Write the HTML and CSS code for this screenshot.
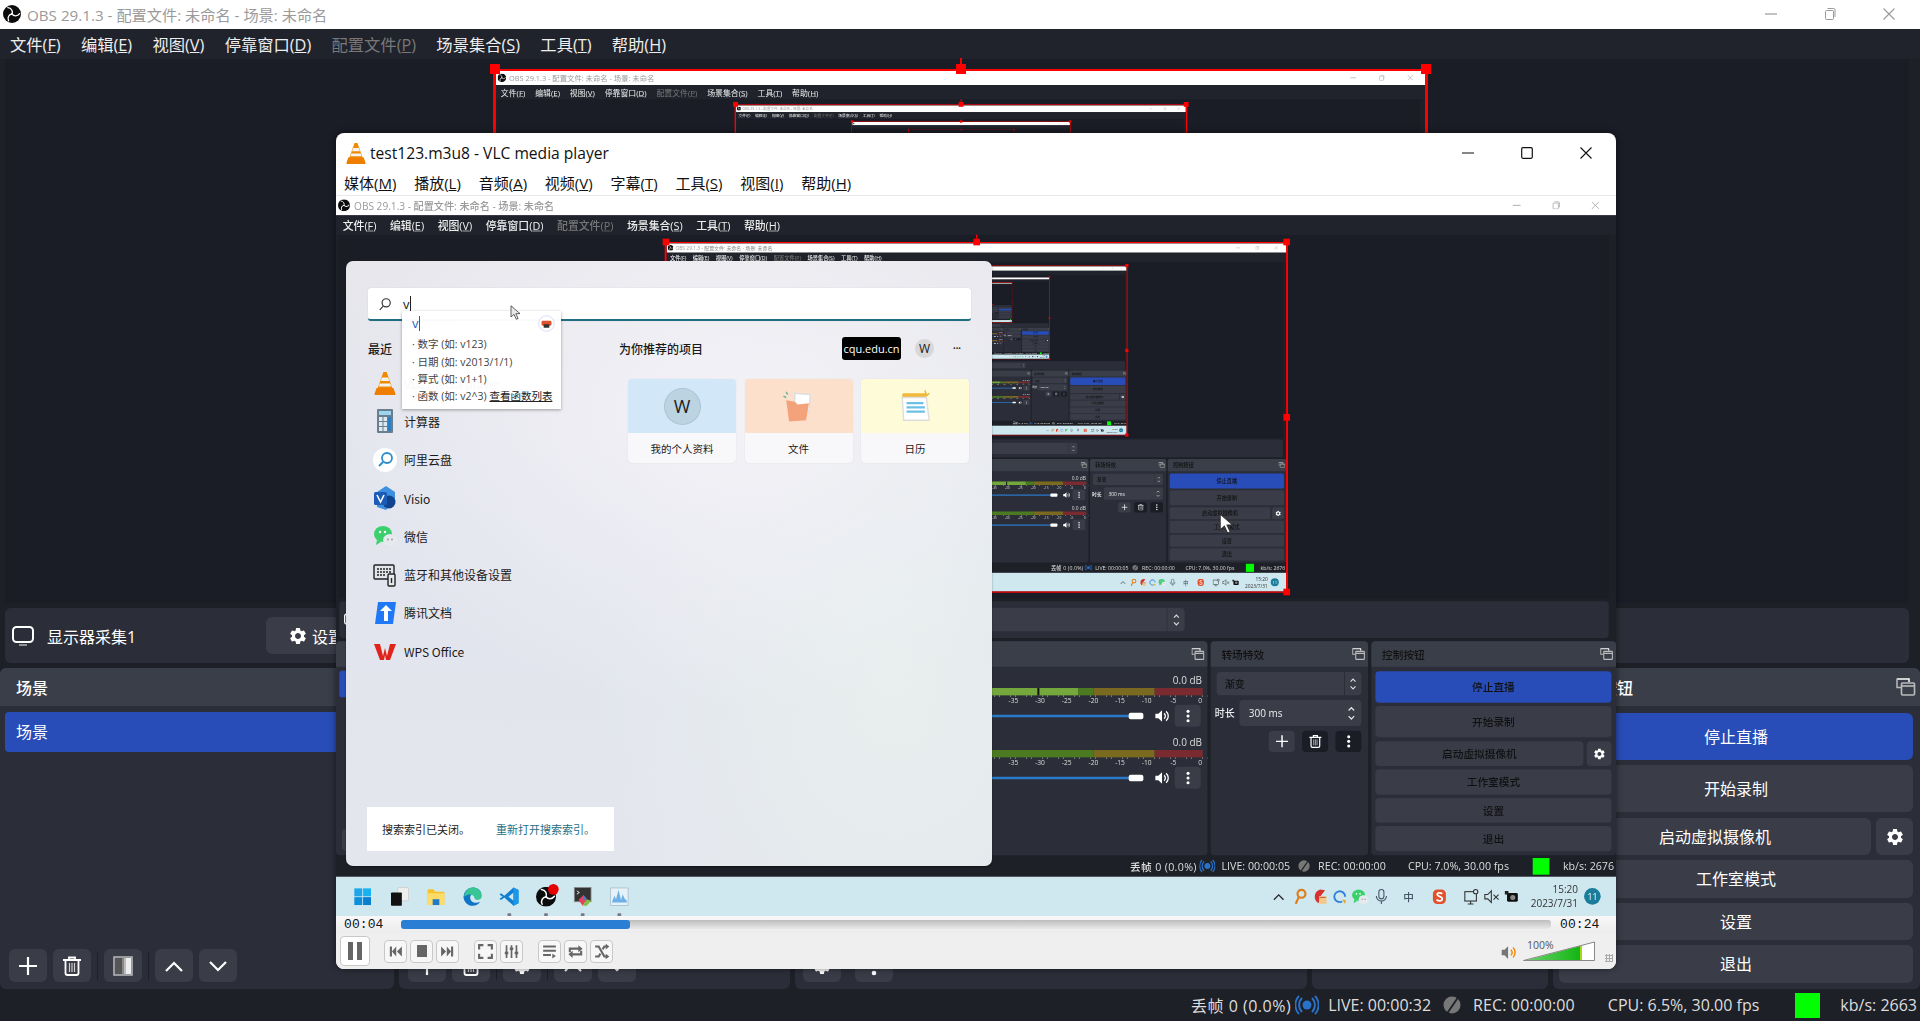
FILE: index.html
```html
<!DOCTYPE html>
<html lang="zh-CN">
<head>
<meta charset="utf-8">
<title>OBS 29.1.3 - VLC media player</title>
<link rel="stylesheet" href="styles.css">
</head>
<body>
<svg class="sprite" aria-hidden="true">
  <symbol id="i-obs" viewBox="0 0 24 24"><circle cx="12" cy="12" r="12" fill="#0c0c0c"/><g fill="none" stroke="#fff" stroke-width="1.800" stroke-linecap="round"><path d="M12 12C13.500 8.500 11.500 4 6.500 3.500"/><path d="M12 12C13.500 8.500 11.500 4 6.500 3.500" transform="rotate(120 12 12)"/><path d="M12 12C13.500 8.500 11.500 4 6.500 3.500" transform="rotate(240 12 12)"/></g></symbol>
  <symbol id="i-vlc" viewBox="0 0 24 24"><path d="M10.400 1h3.200l6 17H4.400z" fill="#f08a00"/><path d="M8.900 6.500h6.200l1.200 3.500H7.700zM6.800 12.500h10.400l1 3H5.800z" fill="#f3f3f3"/><path d="M3.600 17h16.800l2 5.500a1 1 0 0 1-1 1.500H2.600a1 1 0 0 1-1-1.500z" fill="#ef7d00"/></symbol>
  <symbol id="i-float" viewBox="0 0 20 20"><path d="M1 2h12v3" fill="none" stroke="#fff" stroke-width="1.500"/><path d="M1 1.500v9h4" fill="none" stroke="#bbb" stroke-width="1.500"/><rect x="5.500" y="6" width="13" height="12" rx="1" fill="none" stroke="#bbb" stroke-width="1.600"/><path d="M5.500 9h13" stroke="#bbb" stroke-width="1.600"/></symbol>
  <symbol id="i-monitor" viewBox="0 0 24 24"><rect x="2" y="3" width="20" height="15" rx="3.500" fill="none" stroke="#fff" stroke-width="2"/><path d="M8 21h8" stroke="#aaa" stroke-width="1.600"/></symbol>
  <symbol id="i-gear" viewBox="0 0 24 24"><path fill="#fff" d="M19.140 12.940c.04-.3.06-.61.06-.94 0-.32-.02-.64-.07-.94l2.030-1.580a.49.49 0 0 0 .12-.61l-1.920-3.320a.488.488 0 0 0-.59-.22l-2.390.96c-.5-.38-1.030-.7-1.620-.94l-.36-2.540a.484.484 0 0 0-.48-.41h-3.840c-.24 0-.43.17-.47.41l-.36 2.540c-.59.24-1.130.57-1.620.94l-2.390-.96c-.22-.08-.47 0-.59.22L2.740 8.870c-.12.21-.08.47.12.61l2.030 1.580c-.05.3-.09.63-.09.94s.02.64.07.94l-2.030 1.580a.49.49 0 0 0-.12.61l1.920 3.320c.12.22.37.29.59.22l2.390-.96c.5.38 1.030.7 1.620.94l.36 2.540c.05.24.24.41.48.41h3.840c.24 0 .44-.17.47-.41l.36-2.540c.59-.24 1.130-.56 1.620-.94l2.390.96c.22.08.47 0 .59-.22l1.920-3.320c.12-.22.07-.47-.12-.61l-2.010-1.580zM12 15.600c-1.980 0-3.600-1.620-3.600-3.600s1.620-3.600 3.600-3.600 3.600 1.620 3.600 3.600-1.620 3.600-3.600 3.600z"/></symbol>
  <symbol id="i-plus" viewBox="0 0 20 20"><path d="M10 1v18M1 10h18" stroke="#fff" stroke-width="2.200"/></symbol>
  <symbol id="i-trash" viewBox="0 0 20 20"><path d="M1 4h18M7 4V1.500h6V4" fill="none" stroke="#fff" stroke-width="1.800"/><path d="M3.500 4v13a2 2 0 0 0 2 2h9a2 2 0 0 0 2-2V4" fill="none" stroke="#fff" stroke-width="1.800"/><path d="M7.500 7v9M10 7v9M12.500 7v9" stroke="#ccc" stroke-width="1.200"/></symbol>
  <symbol id="i-filter" viewBox="0 0 20 20"><rect x="1" y="1" width="18" height="18" fill="#3a3d48" stroke="#bbb" stroke-width="1.500"/><rect x="2" y="2" width="7" height="16" fill="#555"/><rect x="9" y="2" width="2" height="16" fill="#888"/><rect x="11" y="2" width="2" height="16" fill="#bbb"/><rect x="13" y="2" width="5" height="16" fill="#eee"/></symbol>
  <symbol id="i-up" viewBox="0 0 20 20"><path d="M2 15l8-8 8 8" fill="none" stroke="#fff" stroke-width="2.200"/></symbol>
  <symbol id="i-down" viewBox="0 0 20 20"><path d="M2 6l8 8 8-8" fill="none" stroke="#fff" stroke-width="2.200"/></symbol>
  <symbol id="i-kebab" viewBox="0 0 20 20"><g fill="#fff"><circle cx="10" cy="3" r="2.300"/><circle cx="10" cy="10" r="2.300"/><circle cx="10" cy="17" r="2.300"/></g></symbol>
  <symbol id="i-speaker" viewBox="0 0 24 24"><path d="M2 8.500h4.500L12 3.500v17l-5.500-5H2z" fill="#fff"/><path d="M15 8a5 5 0 0 1 0 8M18 5a9 9 0 0 1 0 14" fill="none" stroke="#fff" stroke-width="2"/></symbol>
  <symbol id="i-live" viewBox="0 0 24 24"><circle cx="12" cy="12" r="4.500" fill="#2a72c8"/><path d="M7 5a10 10 0 0 0 0 14M17 5a10 10 0 0 1 0 14M4 3a13 13 0 0 0 0 18M20 3a13 13 0 0 1 0 18" fill="none" stroke="#2a72c8" stroke-width="1.900"/></symbol>
  <symbol id="i-rec" viewBox="0 0 24 24"><circle cx="12" cy="12" r="8.500" fill="#777"/><path d="M19 3L6 22" stroke="#1e2027" stroke-width="1.800"/></symbol>
  <symbol id="i-win" viewBox="0 0 24 24"><g fill="#0d8fde"><rect x="2" y="2" width="9.500" height="9.500" fill="#1fa5ea"/><rect x="12.500" y="2" width="9.500" height="9.500" fill="#18b2f0"/><rect x="2" y="12.500" width="9.500" height="9.500"/><rect x="12.500" y="12.500" width="9.500" height="9.500" fill="#0a7fd0"/></g></symbol>
  <symbol id="i-view" viewBox="0 0 24 24"><rect x="10" y="1" width="13" height="16" rx="1" fill="#eee" stroke="#ccc"/><rect x="2" y="7" width="13" height="16" rx="1" fill="#111"/></symbol>
  <symbol id="i-folder" viewBox="0 0 24 24"><path d="M2 4a1 1 0 0 1 1-1h6l2 3h10a1 1 0 0 1 1 1v14a1 1 0 0 1-1 1H3a1 1 0 0 1-1-1z" fill="#f6c12b"/><path d="M2 8h20v13a1 1 0 0 1-1 1H3a1 1 0 0 1-1-1z" fill="#fcdc66"/><rect x="8" y="15" width="8" height="7" fill="#1f7cc8"/></symbol>
  <symbol id="i-edge" viewBox="0 0 24 24"><path d="M12 1a11 11 0 0 0-11 11c0 6 5 11 11 11 4 0 7-2 9-5-5 3-12 1-12-5 0-3 3-5 6-5 3 0 5 2 5 4 2-1 2-3 2-4 0-4-5-7-10-7z" fill="#0f76c6"/><path d="M12 1c5 0 11 3 11 10 0 3-2 5-5 5-2 0-4-1-4-3 0-3-6-6-12-1C2 6 6 1 12 1z" fill="#39c694"/></symbol>
  <symbol id="i-vscode" viewBox="0 0 24 24"><path d="M17 1l6 3v16l-6 3L6 13l-4 3-2-1.500L4 12 0 9.500 2 8l4 3z" fill="#0e7fd2"/><path d="M17 7l-6 5 6 5z" fill="#cfe8ef"/><path d="M17 1l6 3v16l-6 3z" fill="#1c98e8"/></symbol>
  <symbol id="i-term" viewBox="0 0 24 24"><rect x="2" y="1" width="20" height="17" fill="#333" stroke="#888"/><path d="M5 5l3 2-3 2" fill="none" stroke="#fff"/><path d="M13 10l4 5-5 8-5-7z" fill="#e8405a"/><path d="M17 15l5 2-5 6-5 0z" fill="#7cc23f"/><path d="M13 10l4 5-5 1z" fill="#3f7fd8"/></symbol>
  <symbol id="i-perf" viewBox="0 0 24 24"><rect x="1.500" y="1.500" width="21" height="21" fill="#e6f2f8" stroke="#a9bfcb"/><path d="M3 19l3-8 2 4 3-11 3 12 2-7 2 5 3 3v2H3z" fill="#6fb0e6"/></symbol>
  <symbol id="i-key" viewBox="0 0 24 24"><circle cx="14" cy="8" r="5.500" fill="none" stroke="#de7d1a" stroke-width="3"/><path d="M10 13l-4 9" stroke="#de7d1a" stroke-width="3"/></symbol>
  <symbol id="i-redapp" viewBox="0 0 24 24"><path d="M12 2c-6 2-8 7-7 13 1 3 3 5 5 6l2-9 7-9z" fill="#d9322e"/><rect x="11" y="11" width="10" height="11" fill="#f3c98b"/><path d="M12 13h8" stroke="#a33"/></symbol>
  <symbol id="i-ring" viewBox="0 0 24 24"><path d="M19 12a7.500 7.500 0 1 0-4 6.600" fill="none" stroke="#2f7fd8" stroke-width="2.600"/><path d="M15 16l5 1-1 5" fill="#f0a020"/></symbol>
  <symbol id="i-wechat" viewBox="0 0 24 24"><ellipse cx="10" cy="10" rx="9" ry="8" fill="#3bd06c"/><path d="M4 16l-1 5 5-3z" fill="#3bd06c"/><ellipse cx="17" cy="16" rx="7" ry="6" fill="#e6eaee"/><circle cx="7" cy="8" r="1.200" fill="#fff"/><circle cx="12" cy="8" r="1.200" fill="#fff"/><circle cx="15" cy="15.500" r=".9" fill="#999"/><circle cx="19" cy="15.500" r=".9" fill="#999"/></symbol>
  <symbol id="i-mic" viewBox="0 0 24 24"><rect x="8.500" y="2" width="7" height="13" rx="3.500" fill="none" stroke="#456" stroke-width="1.500"/><path d="M5 11a7 7 0 0 0 14 0M12 18v4" fill="none" stroke="#456" stroke-width="1.500"/></symbol>
  <symbol id="i-sogou" viewBox="0 0 24 24"><rect x="3" y="2" width="18" height="20" rx="6" fill="#e2502c"/><path d="M16 8c-2-2-7-2-7 1s7 2 7 6-6 3-8 1" fill="none" stroke="#fff" stroke-width="2.400"/></symbol>
  <symbol id="i-net" viewBox="0 0 24 24"><rect x="2" y="5" width="16" height="13" fill="none" stroke="#333" stroke-width="1.500"/><path d="M10 18v4M6 22h8" stroke="#333" stroke-width="1.500"/><circle cx="17" cy="5" r="3" fill="#cfe8ef" stroke="#333" stroke-width="1.500"/></symbol>
  <symbol id="i-mute" viewBox="0 0 24 24"><path d="M2 9h4l5-5v16l-5-5H2z" fill="none" stroke="#333" stroke-width="1.500"/><path d="M14 9l7 7M21 9l-7 7" stroke="#333" stroke-width="1.500"/></symbol>
  <symbol id="i-cam" viewBox="0 0 24 24"><rect x="5" y="7" width="15" height="12" rx="2" fill="#111"/><circle cx="13" cy="13" r="3.500" fill="#888"/><path d="M2 4h5v5H2z" fill="#222"/></symbol>
  <symbol id="i-search" viewBox="0 0 24 24"><circle cx="14" cy="10" r="7" fill="none" stroke="currentColor" stroke-width="2"/><path d="M9 15.500L3 22" stroke="currentColor" stroke-width="2"/></symbol>
  <symbol id="i-calc" viewBox="0 0 24 24"><rect x="4" y="0" width="16" height="24" rx="1" fill="#6a7f8e"/><rect x="6" y="2" width="12" height="4" fill="#9fd4ee"/><g fill="#dfe8ee"><rect x="6" y="8" width="3.500" height="4"/><rect x="10.500" y="8" width="3.500" height="4"/><rect x="6" y="13" width="3.500" height="4"/><rect x="10.500" y="13" width="3.500" height="4"/><rect x="6" y="18" width="3.500" height="4"/><rect x="10.500" y="18" width="3.500" height="4"/></g><rect x="15" y="8" width="3" height="14" fill="#2c7fc0"/></symbol>
  <symbol id="i-visio" viewBox="0 0 24 24"><path d="M13 0l9 6v9l-9 9-9-3V6z" fill="#3d8fe0"/><circle cx="16" cy="16" r="6.500" fill="#11438f"/><rect x="1" y="6" width="13" height="13" rx="1.500" fill="#1b5cb8"/><path d="M4 9l3.500 7L11 9" fill="none" stroke="#fff" stroke-width="1.600"/></symbol>
  <symbol id="i-devices" viewBox="0 0 24 24"><rect x="1" y="2" width="20" height="14" rx="1" fill="none" stroke="#222" stroke-width="1.400"/><path d="M4 6h14M4 9h14M4 12h8" stroke="#222" stroke-width="1.400" stroke-dasharray="2 1"/><rect x="15" y="11" width="7" height="12" rx="1" fill="#e8e9ef" stroke="#222" stroke-width="1.400"/><path d="M18.500 15v5" stroke="#222" stroke-width="1.400"/></symbol>
  <symbol id="i-tdoc" viewBox="0 0 24 24"><path d="M5 1h18l-3 22H2z" fill="#1f78f5"/><path d="M13 4l6 6h-4v10h-4V10H7z" fill="#fff"/></symbol>
  <symbol id="i-wps" viewBox="0 0 24 24"><path d="M1 5h6l3 12 2-8 2 8 3-12h6l-6 16h-4l-1-5-1 5H7z" fill="#e0241c"/></symbol>
  <symbol id="i-ali" viewBox="0 0 24 24"><circle cx="12" cy="12" r="12" fill="#fff"/><circle cx="14" cy="10" r="5" fill="none" stroke="#2a8cc9" stroke-width="1.800"/><path d="M10 14l-4 4" stroke="#2a8cc9" stroke-width="1.800"/></symbol>
  <symbol id="i-files" viewBox="0 0 24 24"><path d="M1 5l2 1M3 2l1 2" stroke="#6fb59a"/><path d="M9 3l11 1-1 12-10-1z" fill="#fff" stroke="#ddd"/><path d="M3 8l6 1 2 2 8-1-2 12-12 1z" fill="#f3a279"/></symbol>
  <symbol id="i-cal" viewBox="0 0 24 24"><path d="M19 1l1 3M22 3l-2 2" stroke="#e8b23c"/><rect x="3" y="3" width="17" height="4" rx="1" fill="#f0b93a"/><path d="M3 6h17l2 16H4z" fill="#fff" stroke="#ddd"/><path d="M6 10h12M6 13h13M6 16h13" stroke="#6cc0e6" stroke-width="1.700"/></symbol>
  <symbol id="i-ime" viewBox="0 0 24 24"><circle cx="12" cy="12" r="11" fill="#fff" stroke="#c8d0f0"/><rect x="5" y="8" width="14" height="7" rx="2" fill="#e2502c"/><rect x="8" y="13" width="8" height="5" fill="#333"/></symbol>
  <symbol id="i-prev" viewBox="0 0 24 24"><path d="M4 5h3v14H4zM13 5v14l-6-7zM21 5v14l-7-7z" fill="#666"/></symbol>
  <symbol id="i-next" viewBox="0 0 24 24"><path d="M20 5h-3v14h3zM11 5v14l6-7zM3 5v14l7-7z" fill="#666"/></symbol>
  <symbol id="i-fs" viewBox="0 0 24 24"><path d="M3 9V3h6M15 3h6v6M21 15v6h-6M9 21H3v-6" fill="none" stroke="#666" stroke-width="3"/></symbol>
  <symbol id="i-ext" viewBox="0 0 24 24"><path d="M5 3v18M12 3v18M19 3v18" stroke="#666" stroke-width="2.400"/><path d="M2.500 14h5M9.500 8h5M16.500 14h5" stroke="#666" stroke-width="3.500"/></symbol>
  <symbol id="i-list" viewBox="0 0 24 24"><path d="M3 5h18M3 11h18M3 17h11" stroke="#666" stroke-width="3"/><path d="M16 15v7l5-3.500z" fill="#666"/></symbol>
  <symbol id="i-loop" viewBox="0 0 24 24"><path d="M4 13V8h13M20 11v5H7" fill="none" stroke="#666" stroke-width="3"/><path d="M16 3v10l6-5zM8 11v10l-6-5z" fill="#666"/></symbol>
  <symbol id="i-rand" viewBox="0 0 24 24"><path d="M3 5h5l8 14h4M3 19h5l2.500-4M13.500 9L16 5h4" fill="none" stroke="#666" stroke-width="3"/><path d="M18 1v8l5-4zM18 15v8l5-4z" fill="#666"/></symbol>
  <symbol id="i-vol" viewBox="0 0 24 24"><path d="M1 8h4l5-5v18l-5-5H1z" fill="#777"/><path d="M14 8a6 6 0 0 1 0 8M17 5a10 10 0 0 1 0 14" fill="none" stroke="#f08a00" stroke-width="2"/></symbol>
  <symbol id="i-min" viewBox="0 0 12 12"><path d="M0 6h12" stroke="currentColor" stroke-width="1.200"/></symbol>
  <symbol id="i-restore" viewBox="0 0 12 12"><rect x="1.500" y="2.500" width="8" height="9" rx="1" fill="none" stroke="currentColor"/><path d="M3.500 .5h6a1.500 1.500 0 0 1 1.500 1.500v7" fill="none" stroke="currentColor"/></symbol>
  <symbol id="i-max" viewBox="0 0 12 12"><rect x=".7" y=".7" width="10.600" height="10.600" rx="1.200" fill="none" stroke="currentColor" stroke-width="1.200"/></symbol>
  <symbol id="i-close" viewBox="0 0 12 12"><path d="M.5 .5l11 11M11.500 .5l-11 11" stroke="currentColor" stroke-width="1.100"/></symbol>
  <symbol id="i-stepper" viewBox="0 0 10 18"><path d="M2 6l3-3 3 3M2 12l3 3 3-3" fill="none" stroke="#ddd" stroke-width="1.400"/></symbol>
  <symbol id="i-cursor" viewBox="0 0 14 20"><path d="M1 1v15l4-3.500 3 6.500 2.500-1-3-6.500h5.500z" stroke="#333" stroke-width="1"/></symbol>
</svg>

<template id="display-tpl">
  <div class="display">
    <div class="obs">
      <header class="obs-title">
        <svg class="obs-logo"><use href="#i-obs"/></svg>
        <span class="obs-title-text">OBS 29.1.3 - 配置文件: 未命名 - 场景: 未命名</span>
        <span class="win-btns">
          <span class="win-btn"><svg class="win-ico"><use href="#i-min"/></svg></span>
          <span class="win-btn"><svg class="win-ico"><use href="#i-restore"/></svg></span>
          <span class="win-btn"><svg class="win-ico"><use href="#i-close"/></svg></span>
        </span>
      </header>
      <nav class="obs-menu">
        <span>文件(<u>F</u>)</span><span>编辑(<u>E</u>)</span><span>视图(<u>V</u>)</span><span>停靠窗口(<u>D</u>)</span><span class="is-off">配置文件(<u>P</u>)</span><span>场景集合(<u>S</u>)</span><span>工具(<u>T</u>)</span><span>帮助(<u>H</u>)</span>
      </nav>
      <div class="preview">
        <div class="selection">
          <div class="capture-slot"></div>
          <i class="hd hd-tl"></i><i class="hd hd-tc"></i><i class="hd hd-tr"></i><i class="hd hd-ml"></i><i class="hd hd-mr"></i><i class="hd hd-bl"></i><i class="hd hd-bc"></i><i class="hd hd-br"></i>
        </div>
      </div>
      <div class="source-bar">
        <svg class="src-ico"><use href="#i-monitor"/></svg>
        <span class="src-name">显示器采集1</span>
        <span class="src-btn"><svg class="src-gear"><use href="#i-gear"/></svg>设置</span>
        <span class="src-btn src-btn-filter">滤镜</span>
        <span class="src-label">屏幕</span>
        <span class="src-combo">显示器 1</span>
        <span class="src-step"><svg class="stepper"><use href="#i-stepper"/></svg></span>
      </div>
      <div class="docks">
        <section class="dock">
          <div class="dock-head"><span>场景</span><svg class="float-ico"><use href="#i-float"/></svg></div>
          <div class="dock-body">
            <div class="scene-row">场景</div>
            <div class="dock-tools">
              <span class="tbtn"><svg class="tico"><use href="#i-plus"/></svg></span>
              <span class="tbtn"><svg class="tico"><use href="#i-trash"/></svg></span>
              <span class="tsep"></span>
              <span class="tbtn"><svg class="tico"><use href="#i-filter"/></svg></span>
              <span class="tsep"></span>
              <span class="tbtn"><svg class="tico"><use href="#i-up"/></svg></span>
              <span class="tbtn"><svg class="tico"><use href="#i-down"/></svg></span>
            </div>
          </div>
        </section>
        <section class="dock">
          <div class="dock-head"><span>来源</span><svg class="float-ico"><use href="#i-float"/></svg></div>
          <div class="dock-body">
            <div class="dock-tools">
              <span class="tbtn"><svg class="tico"><use href="#i-plus"/></svg></span>
              <span class="tbtn"><svg class="tico"><use href="#i-trash"/></svg></span>
              <span class="tsep"></span>
              <span class="tbtn"><svg class="tico"><use href="#i-gear"/></svg></span>
              <span class="tsep"></span>
              <span class="tbtn"><svg class="tico"><use href="#i-up"/></svg></span>
              <span class="tbtn"><svg class="tico"><use href="#i-down"/></svg></span>
            </div>
          </div>
        </section>
        <section class="dock">
          <div class="dock-head"><span>音频混音器</span><svg class="float-ico"><use href="#i-float"/></svg></div>
          <div class="dock-body mixer">
            <div class="channel">
              <div class="ch-top"><span class="ch-name">桌面音频</span><span class="ch-db">0.0 dB</span></div>
              <div class="meter"><i class="m-live"></i><i class="m-green"></i><i class="m-yellow"></i><i class="m-red"></i><i class="m-peak"></i></div>
              <div class="ticks"><span>-60</span><span>-55</span><span>-50</span><span>-45</span><span>-40</span><span>-35</span><span>-30</span><span>-25</span><span>-20</span><span>-15</span><span>-10</span><span>-5</span><span>0</span></div>
              <div class="fader"><div class="track"></div><i class="thumb"></i><svg class="spk"><use href="#i-speaker"/></svg><span class="tbtn kebab"><svg class="tico"><use href="#i-kebab"/></svg></span></div>
            </div>
            <div class="channel">
              <div class="ch-top"><span class="ch-name">麦克风/Aux</span><span class="ch-db">0.0 dB</span></div>
              <div class="meter"><i class="m-green m-green-full"></i><i class="m-yellow"></i><i class="m-red"></i></div>
              <div class="ticks"><span>-60</span><span>-55</span><span>-50</span><span>-45</span><span>-40</span><span>-35</span><span>-30</span><span>-25</span><span>-20</span><span>-15</span><span>-10</span><span>-5</span><span>0</span></div>
              <div class="fader"><div class="track"></div><i class="thumb"></i><svg class="spk"><use href="#i-speaker"/></svg><span class="tbtn kebab"><svg class="tico"><use href="#i-kebab"/></svg></span></div>
            </div>
            <div class="dock-tools mixer-tools">
              <span class="tbtn"><svg class="tico"><use href="#i-gear"/></svg></span>
              <span class="tbtn"><svg class="tico"><use href="#i-kebab"/></svg></span>
            </div>
          </div>
        </section>
        <section class="dock">
          <div class="dock-head"><span>转场特效</span><svg class="float-ico"><use href="#i-float"/></svg></div>
          <div class="dock-body trans">
            <div class="t-combo"><span class="t-combo-text">渐变</span><span class="t-combo-step"><svg class="stepper"><use href="#i-stepper"/></svg></span></div>
            <div class="t-time"><span>时长</span><div class="t-input"><span>300 ms</span><svg class="stepper stepper-lg"><use href="#i-stepper"/></svg></div></div>
            <div class="t-btns">
              <span class="tbtn"><svg class="tico"><use href="#i-plus"/></svg></span>
              <span class="tbtn tbtn-dark"><svg class="tico"><use href="#i-trash"/></svg></span>
              <span class="tbtn tbtn-dark"><svg class="tico"><use href="#i-kebab"/></svg></span>
            </div>
          </div>
        </section>
        <section class="dock">
          <div class="dock-head"><span>控制按钮</span><svg class="float-ico"><use href="#i-float"/></svg></div>
          <div class="dock-body controls">
            <div class="cbtn cbtn-blue">停止直播</div>
            <div class="cbtn cbtn-tall">开始录制</div>
            <div class="vcam-row"><div class="cbtn vcam">启动虚拟摄像机</div><div class="cbtn vcam-gear"><svg class="tico"><use href="#i-gear"/></svg></div></div>
            <div class="cbtn">工作室模式</div>
            <div class="cbtn">设置</div>
            <div class="cbtn">退出</div>
          </div>
        </section>
      </div>
      <footer class="status">
        <span class="st-drop">丢帧 0 (0.0%)</span>
        <svg class="st-ico"><use href="#i-live"/></svg>
        <span class="st-live" data-stat="live"></span>
        <svg class="st-ico st-ico-rec"><use href="#i-rec"/></svg>
        <span class="st-rec">REC: 00:00:00</span>
        <span class="st-cpu" data-stat="cpu"></span>
        <i class="st-square"></i>
        <span class="st-kb" data-stat="kb"></span>
      </footer>
    </div>
    <div class="taskbar">
      <div class="tb-apps">
        <svg class="tb-ico"><use href="#i-win"/></svg>
        <svg class="tb-ico"><use href="#i-view"/></svg>
        <svg class="tb-ico"><use href="#i-folder"/></svg>
        <svg class="tb-ico"><use href="#i-edge"/></svg>
        <span class="tb-run"><svg class="tb-ico"><use href="#i-vscode"/></svg></span>
        <span class="tb-run"><svg class="tb-ico"><use href="#i-obs"/></svg><i class="tb-red"></i></span>
        <span class="tb-run"><svg class="tb-ico"><use href="#i-term"/></svg></span>
        <span class="tb-run"><svg class="tb-ico"><use href="#i-perf"/></svg></span>
      </div>
      <div class="tb-tray">
        <svg class="tr-ico tr-chev"><use href="#i-up"/></svg>
        <svg class="tr-ico tr-key"><use href="#i-key"/></svg>
        <svg class="tr-ico"><use href="#i-redapp"/></svg>
        <svg class="tr-ico"><use href="#i-ring"/></svg>
        <svg class="tr-ico"><use href="#i-wechat"/></svg>
        <svg class="tr-ico tr-mic"><use href="#i-mic"/></svg>
        <span class="tr-text">中</span>
        <svg class="tr-ico tr-sogou"><use href="#i-sogou"/></svg>
        <svg class="tr-ico tr-net"><use href="#i-net"/></svg>
        <svg class="tr-ico"><use href="#i-mute"/></svg>
        <svg class="tr-ico"><use href="#i-cam"/></svg>
        <div class="tb-clock"><span>15:20</span><span>2023/7/31</span></div>
        <span class="tb-badge">11</span>
      </div>
    </div>
  </div>
</template>

<main class="desktop" id="desktop">
  <section class="vlc">
    <header class="vlc-title">
      <svg class="vlc-cone"><use href="#i-vlc"/></svg>
      <span class="vlc-title-text">test123.m3u8 - VLC media player</span>
      <span class="vlc-win">
        <span class="vlc-win-btn"><svg class="vlc-win-ico"><use href="#i-min"/></svg></span>
        <span class="vlc-win-btn"><svg class="vlc-win-ico"><use href="#i-max"/></svg></span>
        <span class="vlc-win-btn"><svg class="vlc-win-ico"><use href="#i-close"/></svg></span>
      </span>
    </header>
    <nav class="vlc-menu">
      <span>媒体(<u>M</u>)</span><span>播放(<u>L</u>)</span><span>音频(<u>A</u>)</span><span>视频(<u>V</u>)</span><span>字幕(<u>T</u>)</span><span>工具(<u>S</u>)</span><span>视图(<u>I</u>)</span><span>帮助(<u>H</u>)</span>
    </nav>
    <div class="vlc-video" id="vlc-video">
      <div class="search-panel">
        <div class="search-box">
          <svg class="search-ico"><use href="#i-search"/></svg>
          <span class="search-v">v</span><i class="caret"></i>
        </div>
        <div class="search-main">
          <div class="recent">
            <h3 class="s-head">最近</h3>
            <ul class="app-list">
              <li><svg class="app-ico"><use href="#i-vlc"/></svg><span>VLC media player</span></li>
              <li><svg class="app-ico"><use href="#i-calc"/></svg><span>计算器</span></li>
              <li><svg class="app-ico"><use href="#i-ali"/></svg><span>阿里云盘</span></li>
              <li><svg class="app-ico"><use href="#i-visio"/></svg><span>Visio</span></li>
              <li><svg class="app-ico"><use href="#i-wechat"/></svg><span>微信</span></li>
              <li><svg class="app-ico"><use href="#i-devices"/></svg><span>蓝牙和其他设备设置</span></li>
              <li><svg class="app-ico"><use href="#i-tdoc"/></svg><span>腾讯文档</span></li>
              <li><svg class="app-ico"><use href="#i-wps"/></svg><span>WPS Office</span></li>
            </ul>
          </div>
          <div class="recommend">
            <div class="rec-head">
              <h3 class="s-head">为你推荐的项目</h3>
              <span class="org">cqu.edu.cn</span>
              <span class="avatar-sm">W</span>
              <span class="dots">•••</span>
            </div>
            <div class="cards">
              <div class="card"><div class="card-top c-blue"><span class="avatar-lg">W</span></div><div class="card-label">我的个人资料</div></div>
              <div class="card"><div class="card-top c-orange"><svg class="card-ico"><use href="#i-files"/></svg></div><div class="card-label">文件</div></div>
              <div class="card"><div class="card-top c-yellow"><svg class="card-ico"><use href="#i-cal"/></svg></div><div class="card-label">日历</div></div>
            </div>
          </div>
        </div>
        <div class="notice"><span>搜索索引已关闭。</span><span class="notice-link">重新打开搜索索引。</span></div>
        <div class="ime">
          <div class="ime-head"><span class="ime-v">v</span><i class="ime-caret"></i><svg class="ime-logo"><use href="#i-ime"/></svg></div>
          <div class="ime-row">· 数字 (如: v123)</div>
          <div class="ime-row">· 日期 (如: v2013/1/1)</div>
          <div class="ime-row">· 算式 (如: v1+1)</div>
          <div class="ime-row">· 函数 (如: v2^3) <u>查看函数列表</u></div>
        </div>
        <svg class="cursor-small"><use href="#i-cursor"/></svg>
      </div>
      <svg class="cursor-big"><use href="#i-cursor"/></svg>
    </div>
    <div class="vlc-seek">
      <span class="vlc-time">00:04</span>
      <div class="seek-bar"><div class="seek-fill"></div></div>
      <span class="vlc-time">00:24</span>
    </div>
    <div class="vlc-ctrl">
      <span class="vb vb-pause"><i></i><i></i></span>
      <div class="vb-group"><span class="vb"><svg class="vb-ico"><use href="#i-prev"/></svg></span><span class="vb"><i class="vb-stop"></i></span><span class="vb"><svg class="vb-ico"><use href="#i-next"/></svg></span></div>
      <div class="vb-group"><span class="vb"><svg class="vb-ico"><use href="#i-fs"/></svg></span><span class="vb"><svg class="vb-ico"><use href="#i-ext"/></svg></span></div>
      <div class="vb-group"><span class="vb"><svg class="vb-ico"><use href="#i-list"/></svg></span><span class="vb"><svg class="vb-ico"><use href="#i-loop"/></svg></span><span class="vb"><svg class="vb-ico"><use href="#i-rand"/></svg></span></div>
      <div class="vol">
        <svg class="vol-ico"><use href="#i-vol"/></svg>
        <div class="vol-meter">
          <svg class="vol-tri" viewBox="0 0 72 20"><defs><linearGradient id="volg"><stop offset="0" stop-color="#6fd36f"/><stop offset="1" stop-color="#13b513"/></linearGradient></defs><path d="M0 20L72 1v19z" fill="#fff"/><path d="M0 20L57 5v15z" fill="url(#volg)"/><path d="M57 5l2-.5V20h-2z" fill="#a6d71c"/><path d="M.5 19.500L71.500 1v18.500z" fill="none" stroke="#888"/></svg>
          <span class="vol-pct">100%</span>
        </div>
        <i class="grip"></i>
      </div>
    </div>
  </section>
</main>
<script src="app.js"></script>
</body>
</html>
```

FILE: styles.css
```css
*{box-sizing:border-box}
html,body{margin:0;padding:0}
body{width:1920px;height:1021px;overflow:hidden;background:#1e2027;font-family:"Open Sans","Noto Sans CJK SC",sans-serif;color:#fff}
.sprite{display:none}
.desktop{position:relative;width:1920px;height:1021px;overflow:hidden}
.desktop>.display{height:1021px}
.desktop>.display>.taskbar{display:none}
.display{width:1920px;height:1080px;display:flex;flex-direction:column}
.obs{width:1920px;height:1021px;flex:none;background:#1e2027;display:flex;flex-direction:column}

/* OBS chrome */
.obs-title{height:29px;flex:none;background:#fff;display:flex;align-items:center;padding:0 0 2px 3px;color:#9a9a9a;font-size:15.200px}
.obs-logo{width:18px;height:18px;flex:none}
.obs-title-text{margin-left:6px;white-space:nowrap}
.win-btns{margin-left:auto;display:flex;padding-right:2px}
.win-btn{width:59px;display:flex;justify-content:center;color:#999}
.win-ico{width:12px;height:12px}
.obs-menu{height:30px;flex:none;background:#20232b;display:flex;align-items:center;gap:20.300px;padding-left:10px;font-size:16.300px;color:#eee;white-space:nowrap}
.obs-menu .is-off{color:#777}
.preview{height:544px;flex:none;margin:0 11px 0 5px;background:#1a1c26;position:relative}
.selection{position:absolute;left:491px;top:12px;width:929px;height:522px;box-shadow:-3px 0 0 #f00,3px 0 0 #f00,0 -2px 0 #f00,0 2px 0 #f00;background:#1a1c26}
.capture-slot{width:929px;height:522px;overflow:hidden}
.capture-slot>.display{transform:scale(.484);transform-origin:0 0}
.hd{position:absolute;width:10px;height:10px;background:#f00}
.hd-tl{left:-6px;top:-7px}
.hd-tc{left:460px;top:-7px}
.hd-tc::before{content:"";position:absolute;left:4px;top:-6px;width:2px;height:6px;background:#f00}
.hd-tr{right:-6px;top:-7px}
.hd-ml{left:-6px;top:256px}
.hd-mr{right:-6px;top:256px}
.hd-bl{left:-6px;bottom:-6px}
.hd-bc{left:460px;bottom:-6px}
.hd-br{right:-6px;bottom:-6px}

.source-bar{height:55px;flex:none;margin:5px 11px 5px 5px;background:#2b2e38;border-radius:6px;display:flex;align-items:center;padding-left:6px;font-size:16px;white-space:nowrap}
.src-ico{width:24px;height:24px;flex:none}
.src-name{margin-left:12px;width:219px;flex:none}
.src-btn{width:100px;height:37px;flex:none;background:#3a3d48;border-radius:6px;display:flex;align-items:center;justify-content:center;gap:4px}
.src-btn:first-of-type{justify-content:flex-start;padding-left:15px}
.src-btn-filter{margin-left:6px}
.src-gear{width:20px;height:20px}
.src-label{margin:0 12px 0 auto;color:#ddd}
.src-combo{width:690px;height:35px;flex:none;background:#3a3d48;border-radius:6px 0 0 6px;display:flex;align-items:center;padding-left:12px}
.src-step{width:27px;height:35px;flex:none;background:#3a3d48;border-left:1px solid #23252e;border-radius:0 6px 6px 0;display:flex;align-items:center;justify-content:center;margin-right:636px}
.stepper{width:13px;height:22px}

/* Docks */
.docks{height:321px;flex:none;display:grid;grid-template-columns:394px 391px 512px 236px 367px;column-gap:5px}
.dock{background:#2b2e38;border-radius:6px;display:flex;flex-direction:column;min-width:0;font-size:16px}
.dock-head{height:38px;flex:none;background:#3a3e48;border-radius:6px 6px 0 0;display:flex;align-items:center;justify-content:space-between;padding:0 4px 0 16px;font-weight:500}
.float-ico{width:20px;height:20px}
.dock-body{flex:1;display:flex;flex-direction:column;min-height:0}
.scene-row{height:40px;flex:none;margin:6px 5px 0;background:#284cb8;border-radius:4px;display:flex;align-items:center;padding:0 0 2px 11px}
.dock-tools{margin-top:auto;height:40px;flex:none;display:flex;gap:6px;padding:0 0 6px 9px;align-items:stretch}
.tbtn{width:38px;height:33px;flex:none;background:#3a3d48;border-radius:6px;display:flex;align-items:center;justify-content:center}
.tbtn-dark{background:#1a1c26}
.tico{width:20px;height:20px}
.tsep{width:1px;background:#1e2027;margin:3px 0}
.mixer{padding-top:10px;gap:13px}
.channel{display:flex;flex-direction:column}
.ch-top{height:20px;display:flex;justify-content:space-between;padding:0 8px 0 21px;font-size:15px;line-height:20px;color:#ddd}
.meter{margin:2px 7px 0 21px;height:11px;display:flex;position:relative}
.meter i{display:block;height:100%}
.m-live{width:297px;background:#74a83c}
.m-green{width:23px;background:#4c7a21}
.m-green-full{width:320px}
.m-yellow{width:92px;background:#7a6a1f}
.m-red{width:72px;background:#7a2b30}
.m-peak{position:absolute;left:236px;top:0;width:3px;background:#111}
.ticks{height:14px;display:flex;margin-left:1px;font-size:10px;line-height:15px;color:#ddd;background:repeating-linear-gradient(90deg,transparent 0 7px,#999 7px 8px) 0 0/100% 2px no-repeat}
.ticks span{width:40px;flex:none;text-align:center}
.fader{height:33px;display:flex;align-items:center;padding:0 10px 0 21px;position:relative}
.track{width:375px;height:4px;flex:none;background:#2a78c8;border-radius:2px}
.thumb{width:22px;height:10px;flex:none;background:#fff;border-radius:3px;margin-left:-2px}
.spk{width:24px;height:24px;margin-left:16px;flex:none}
.kebab{margin-left:auto;width:39px}
.mixer-tools{justify-content:flex-start;padding-left:8px;gap:14px}
.trans{padding:8px 10px 0 9px}
.t-combo{height:35px;flex:none;background:#3a3d48;border-radius:6px;display:flex;align-items:center}
.t-combo-text{flex:1;padding-left:12px;font-size:15px}
.t-combo-step{width:26px;height:35px;border-left:1px solid #23252e;display:flex;align-items:center;justify-content:center}
.t-time{margin-top:7px;display:flex;align-items:center;gap:7px;font-size:15px;color:#eee;margin-left:-3px}
.t-input{flex:1;height:39px;background:#3a3d48;border-radius:6px;display:flex;align-items:center;justify-content:space-between;padding:0 8px 0 14px}
.stepper-lg{height:34px;width:14px}
.t-btns{margin-top:7px;display:flex;justify-content:flex-end;gap:11px}
.t-btns .tbtn{width:39px;height:32px}
.controls{padding:7px 7px 0 6px}
.cbtn{height:38px;flex:none;background:#3a3d48;border-radius:6px;display:flex;align-items:center;justify-content:center;margin-bottom:5px;font-size:16px;padding-bottom:2px}
.cbtn-blue{height:47px;background:#284cb8}
.cbtn-tall{height:47px;margin-bottom:6px}
.vcam-row{display:flex;gap:5px;height:37px;margin-bottom:5px;flex:none}
.vcam{flex:1;height:37px;margin:0}
.vcam-gear{width:37px;height:37px;margin:0;padding:0}
.controls .cbtn:nth-child(5){height:37px}

/* Status */
.status{height:32px;flex:none;display:flex;align-items:center;font-size:16px;color:#ddd;white-space:nowrap;padding-right:3px}
.st-drop{margin-left:auto;letter-spacing:.5px}
.st-ico{width:24px;height:24px;flex:none;margin-left:4px}
.st-ico-rec{margin-left:9px}
.st-live{margin-left:9px}
.st-rec{margin-left:9px;letter-spacing:.1px}
.st-cpu{margin-left:33px}
.st-square{width:25px;height:25px;background:#0f0;margin-left:36px;flex:none}
.st-kb{margin-left:20px}

/* Taskbar inside the captured display */
.taskbar{height:59px;flex:none;background:#cfe8ef;display:flex;align-items:center;justify-content:space-between;color:#222}
.tb-apps{display:flex;align-items:center;gap:25px;padding-left:25px}
.tb-ico{width:30px;height:30px;display:block}
.tb-run{position:relative;display:block}
.tb-run::after{content:"";position:absolute;left:12px;bottom:-14px;width:6px;height:4px;border-radius:2px;background:#778}
.tb-red{position:absolute;right:-4px;top:-4px;width:16px;height:16px;border-radius:50%;background:#e60000}
.tb-tray{display:flex;align-items:center;padding-right:23px}
.tr-ico{width:26px;height:26px;margin-left:4px;flex:none}
.tr-chev{width:18px;height:18px;filter:invert(.85)}
.tr-key{margin-left:10px}
.tr-mic{margin-left:6px}
.tr-text{width:30px;margin-left:13px;text-align:center;font-size:16px;color:#456}
.tr-sogou{margin-left:18px}
.tr-net{margin-left:23px}
.tb-clock{display:flex;flex-direction:column;align-items:flex-end;margin-left:15px;font-size:15px;line-height:21px;color:#333}
.tb-badge{width:25px;height:25px;margin-left:9px;border-radius:50%;background:#1a7d9b;color:#fff;font-size:13px;display:flex;align-items:center;justify-content:center}

/* VLC */
.vlc{position:absolute;left:336px;top:133px;width:1280px;height:836px;background:#fff;border-radius:8px;overflow:hidden;display:flex;flex-direction:column;color:#111;box-shadow:0 0 6px rgba(0,0,0,.5)}
.vlc-title{height:43px;flex:none;display:flex;align-items:center;padding:0 0 4px 9px}
.vlc-cone{width:22px;height:22px;flex:none}
.vlc-title-text{margin-left:3px;font-size:15.600px;white-space:nowrap}
.vlc-win{margin-left:auto;display:flex;padding-right:1px}
.vlc-win-btn{width:59px;display:flex;justify-content:center;color:#111}
.vlc-win-ico{width:12px;height:12px}
.vlc-menu{height:20px;flex:none;display:flex;align-items:center;gap:17.800px;padding:0 0 6px 8px;font-size:15px;white-space:nowrap;border-bottom:1px solid #e8e8e8}
.vlc-video{height:720px;flex:none;position:relative;overflow:hidden;background:#1e2027}
.vlc-video>.display{transform:scale(.6667);transform-origin:0 0;font-weight:500}

.search-panel{position:absolute;left:10px;top:65px;width:646px;height:605px;border-radius:7px;padding:27px 21px 15px 22px;display:flex;flex-direction:column;color:#1a1a1a;font-family:"Noto Sans CJK SC","Open Sans",sans-serif;background:radial-gradient(400px 300px at 60% 25%,rgba(245,243,248,.9),transparent),radial-gradient(300px 400px at 85% 70%,rgba(232,240,238,.9),transparent),linear-gradient(#e7e7ec,#e2e5ee 45%,#e4e6ed);box-shadow:0 1px 2px rgba(0,0,0,.4)}
.search-box{height:33px;flex:none;background:#fff;border-radius:3px;border-bottom:2px solid #1f6f83;display:flex;align-items:center;padding-left:10px;box-shadow:0 0 1px #bbb}
.search-ico{width:14px;height:14px;color:#333}
.search-v{margin-left:11px;font-size:13px;font-family:"Open Sans",sans-serif}
.caret{width:1px;height:16px;background:#222}
.search-main{flex:1;display:flex;padding-top:16px;min-height:0}
.recent{width:251px;flex:none}
.s-head{margin:0;height:23px;display:flex;align-items:center;font-size:12px;font-weight:500;white-space:nowrap}
.app-list{list-style:none;margin:4px 0 0;padding:0 0 0 5px}
.app-list li{height:38.300px;display:flex;align-items:center;gap:7px;font-size:12px}
.app-ico{width:24px;height:24px;flex:none}
.recommend{flex:1;min-width:0}
.rec-head{height:23px;display:flex;align-items:center}
.org{margin-left:auto;width:59px;height:23px;flex:none;background:#000;color:#fff;border-radius:3px;font-size:11px;font-family:"Open Sans",sans-serif;display:flex;align-items:center;justify-content:center;white-space:nowrap}
.avatar-sm{width:19px;height:19px;flex:none;margin-left:14px;border-radius:50%;background:#d8d8d8;font-size:12px;display:flex;align-items:center;justify-content:center;font-family:"Open Sans",sans-serif}
.dots{width:14px;flex:none;margin:0 4px 0 19px;font-size:7px;line-height:7px;letter-spacing:0;font-family:"Open Sans",sans-serif;white-space:nowrap}
.cards{margin:19px 0 0 9px;display:grid;grid-template-columns:108px 108px 108px;gap:8.500px}
.card{height:84px;border-radius:4px;overflow:hidden;background:#f8f8fb;box-shadow:0 0 1px #ccc}
.card-top{height:54px;display:flex;align-items:center;justify-content:center}
.c-blue{background:#d2e8f9}
.c-orange{background:#fde0cc}
.c-yellow{background:#fdfbd8}
.avatar-lg{width:35px;height:35px;border-radius:50%;background:#bcd3e2;font-size:18px;display:flex;align-items:center;justify-content:center;font-family:"Open Sans",sans-serif;box-shadow:0 0 0 1px #a9c4d6}
.card-ico{width:34px;height:34px}
.card-label{height:30px;display:flex;align-items:center;justify-content:center;font-size:10.500px}
.notice{width:247px;height:44px;flex:none;margin-left:-1px;background:#fff;display:flex;align-items:center;padding-left:15px;font-size:11px;gap:26px;color:#222}
.notice-link{color:#1f6f83}
.ime{position:absolute;left:56px;top:50px;width:159px;height:98px;background:rgba(255,255,255,.97);box-shadow:0 1px 3px rgba(0,0,0,.35);padding:0 4px 0 10px;font-family:"Open Sans","Noto Sans CJK SC",sans-serif;font-size:10.500px;color:#444}
.ime-head{height:24px;display:flex;align-items:center;padding-right:2px}
.ime-v{color:#2a5fc0;font-size:13px}
.ime-caret{width:1px;height:15px;background:#a33}
.ime-logo{width:17px;height:17px;margin-left:auto}
.ime-row{height:17.400px;display:flex;align-items:center;white-space:pre}
.ime-row u{color:#222}
.cursor-small{position:absolute;left:164px;top:44px;width:11px;height:15px;fill:#e8e8e8}
.cursor-big{position:absolute;left:883px;top:317px;width:15px;height:21px;fill:#fff}

.vlc-seek{height:17px;flex:none;display:flex;align-items:center;padding:0 8px;background:linear-gradient(#f8f8f8,#ececec)}
.vlc-time{width:48px;flex:none;font-family:"Liberation Mono",monospace;font-size:13px;letter-spacing:.1px;color:#111}
.seek-bar{flex:1;height:9px;margin:0 9px 0 9px;border-radius:3px;background:linear-gradient(#bdbdbd,#e8e8e8)}
.seek-fill{width:19.900%;height:100%;background:#2a7fd4;border-radius:3px}
.vlc-ctrl{height:36px;flex:none;display:flex;align-items:center;background:#efefef;padding-left:4px}
.vb{width:23px;height:23px;flex:none;background:#f7f7f7;border:1px solid #c8c8c8;border-radius:4px;display:flex;align-items:center;justify-content:center}
.vb-pause{width:30px;height:30px;gap:4px;background:#fff;margin-right:14px}
.vb-pause i{width:5px;height:18px;background:#666}
.vb-stop{width:10px;height:12px;background:#666}
.vb-ico{width:17px;height:17px}
.vb-group{display:flex;gap:3px;margin-right:15px}
.vol{margin-left:auto;display:flex;align-items:flex-end;height:30px;padding-right:3px}
.vol-ico{width:17px;height:17px;flex:none;margin:0 5px 5px 0}
.vol-meter{position:relative;width:72px;height:20px;margin-bottom:5px}
.vol-tri{display:block;width:72px;height:20px}
.vol-pct{position:absolute;left:4px;top:-2px;font-size:10.500px;color:#555;line-height:12px}
.grip{width:8px;height:8px;margin:0 0 4px 10px;background:radial-gradient(circle,#aaa 1px,transparent 1.200px) 0 0/3px 3px}
```

FILE: app.js
```js
// The screen is captured recursively: every OBS preview shows the whole display again.
var template = document.getElementById('display-tpl');

function stripText(node) {
  // The innermost capture is too small to carry legible text; only its shapes remain.
  var walker = document.createTreeWalker(node, NodeFilter.SHOW_TEXT);
  var texts = [];
  while (walker.nextNode()) { texts.push(walker.currentNode); }
  texts.forEach(function (t) { t.remove(); });
}

function buildDisplay(depth, stats) {
  var node = template.content.firstElementChild.cloneNode(true);
  node.querySelectorAll('[data-stat]').forEach(function (el) {
    el.textContent = stats[el.dataset.stat];
  });
  if (depth > 0) {
    node.querySelector('.capture-slot').appendChild(buildDisplay(depth - 1, stats));
  } else {
    stripText(node);
  }
  return node;
}

var outerStats = { live: 'LIVE: 00:00:32', cpu: 'CPU: 6.5%, 30.00 fps', kb: 'kb/s: 2663' };
var innerStats = { live: 'LIVE: 00:00:05', cpu: 'CPU: 7.0%, 30.00 fps', kb: 'kb/s: 2676' };

document.getElementById('desktop').prepend(buildDisplay(3, outerStats));
document.getElementById('vlc-video').prepend(buildDisplay(4, innerStats));
```
